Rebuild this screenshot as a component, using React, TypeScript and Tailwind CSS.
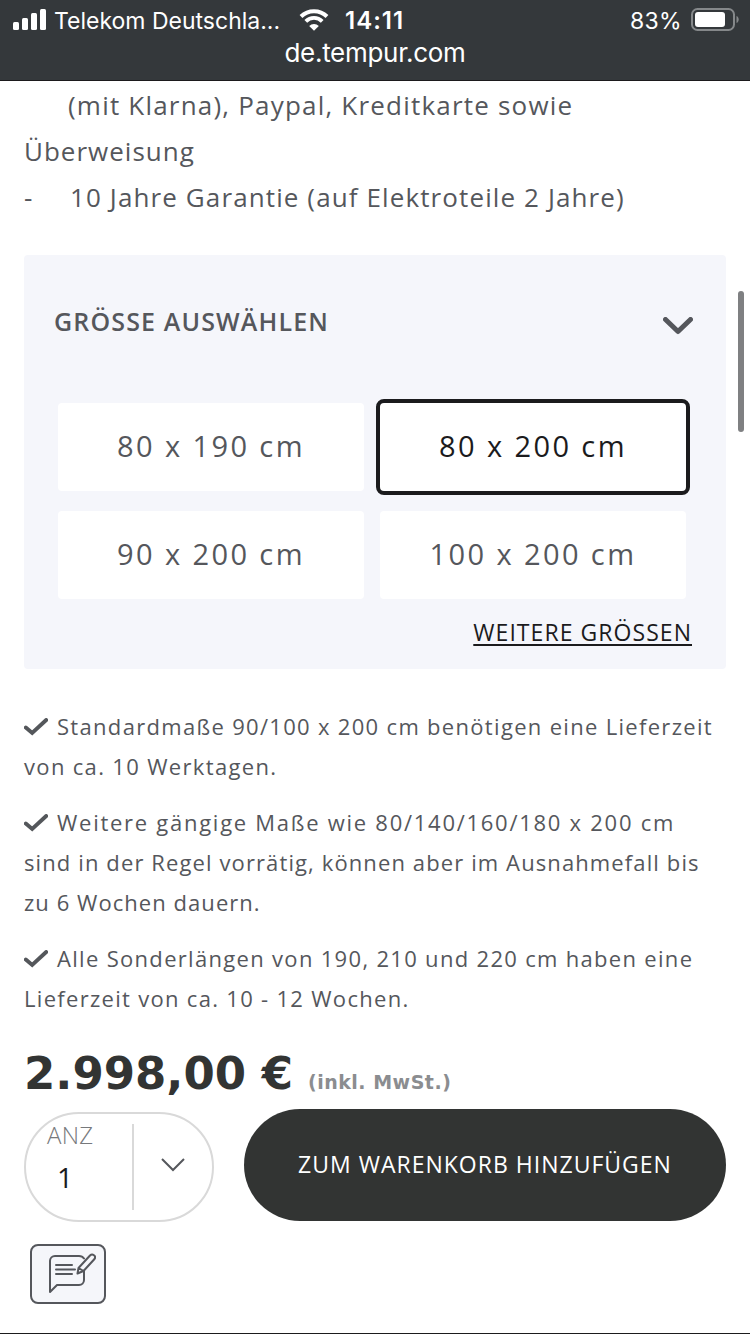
import React, { useState } from 'react'

const sizes = ['80 x 190 cm', '80 x 200 cm', '90 x 200 cm', '100 x 200 cm']

const notes = [
  [
    { text: 'Standardmaße 90/100 x 200 cm benötigen eine Lieferzeit', tracking: 'tracking-[1.31px]' },
    { text: 'von ca. 10 Werktagen.', tracking: 'tracking-[1.33px]' },
  ],
  [
    { text: 'Weitere gängige Maße wie 80/140/160/180 x 200 cm', tracking: 'tracking-[1.73px]' },
    { text: 'sind in der Regel vorrätig, können aber im Ausnahmefall bis', tracking: 'tracking-[1.11px]' },
    { text: 'zu 6 Wochen dauern.', tracking: 'tracking-[1.05px]' },
  ],
  [
    { text: 'Alle Sonderlängen von 190, 210 und 220 cm haben eine', tracking: 'tracking-[1.31px]' },
    { text: 'Lieferzeit von ca. 10 - 12 Wochen.', tracking: 'tracking-[1.3px]' },
  ],
]

function StatusBar() {
  return (
    <header className="h-[81px] shrink-0 border-b border-[#1c1a1d] bg-[#34383b] font-['Inter'] text-white">
      <div className="flex h-10 items-center pl-[13px] pr-[11px]">
        <svg width="34" height="21" viewBox="0 0 34 21" fill="white" className="-mt-px shrink-0">
          <rect x="0" y="13" width="6" height="8" rx="1.5" />
          <rect x="9" y="9" width="6" height="12" rx="1.5" />
          <rect x="18" y="4" width="6" height="17" rx="1.5" />
          <rect x="27" y="0" width="6" height="21" rx="1.5" />
        </svg>
        <span className="ml-[7px] w-[229px] whitespace-nowrap pt-0.5 text-[23px] leading-10">Telekom Deutschla...</span>
        <svg width="30" height="22" viewBox="0 0 30 22" className="ml-4 shrink-0">
          <path d="M2 7.5a18.5 18.5 0 0 1 26 0" fill="none" stroke="white" strokeWidth="4" />
          <path d="M6.8 12.3a11.6 11.6 0 0 1 16.4 0" fill="none" stroke="white" strokeWidth="3.8" />
          <path d="M10.2 17a6.8 6.8 0 0 1 9.6 0L15 21.8z" fill="white" />
        </svg>
        <span className="ml-4 whitespace-nowrap pt-0.5 text-[24px] font-semibold leading-10 tracking-[1px]">14:11</span>
        <span className="ml-auto whitespace-nowrap pt-0.5 text-[23px] leading-10 tracking-[0.3px]">83%</span>
        <svg width="48" height="24" viewBox="0 0 48 24" className="ml-[9px] shrink-0">
          <rect x="1" y="1" width="42" height="21" rx="5.5" fill="none" stroke="#85888a" strokeWidth="2" />
          <rect x="4" y="4" width="30" height="15" rx="3" fill="white" />
          <path d="M45.5 8v7c1.5-.6 2.2-2 2.2-3.5s-.7-2.9-2.2-3.5z" fill="#85888a" />
        </svg>
      </div>
      <p className="-mt-1 text-center text-[26px] leading-[34px] tracking-[-0.3px]">de.tempur.com</p>
    </header>
  )
}

function CheckMark() {
  return (
    <svg width="24" height="18" viewBox="0 0 24 18" className="mr-[9px] mt-px shrink-0">
      <path d="M1.8 9.5 8.2 15 22.2 2" fill="none" stroke="#54575b" strokeWidth="3.9" strokeLinecap="round" />
    </svg>
  )
}

function SizePicker() {
  const [selected, setSelected] = useState('80 x 200 cm')

  return (
    <section className="mt-[35px] h-[414px] rounded bg-[#f5f6fb] pl-[30px] pr-[36px]">
      <div className="flex h-[144px] items-center justify-between pb-[10px]">
        <h2 className="whitespace-nowrap text-[25px] font-semibold tracking-[1.15px] text-[#55575c]">GRÖSSE AUSWÄHLEN</h2>
        <svg width="30" height="18" viewBox="0 0 30 18" className="-mr-[3px] mt-2">
          <path d="M2.5 2.5 15 14.5 27.5 2.5" fill="none" stroke="#55575c" strokeWidth="5" strokeLinecap="round" strokeLinejoin="round" />
        </svg>
      </div>
      <div className="grid grid-cols-2 gap-x-2 gap-y-3">
        {sizes.map((size) => (
          <button
            key={size}
            onClick={() => setSelected(size)}
            className={`h-24 whitespace-nowrap rounded-lg border-4 bg-white bg-clip-padding pb-[3px] text-[29px] tracking-[2.4px] ${
              selected === size ? 'border-[#1b1b1d] text-[#1b1b1d]' : 'border-transparent text-[#55575c]'
            }`}
          >
            {size}
          </button>
        ))}
      </div>
      <div className="mt-[11px] flex justify-end">
        <a href="#" className="-mr-[2px] whitespace-nowrap text-[23px] leading-[36px] tracking-[1.05px] text-[#1b1b1d] underline decoration-2 underline-offset-[3px]">
          WEITERE GRÖSSEN
        </a>
      </div>
    </section>
  )
}

function BuyRow() {
  return (
    <div className="flex items-start">
      <div className="mt-[3px] flex h-[110px] w-[190px] shrink-0 rounded-full border-2 border-[#d9d9d9]">
        <div className="flex w-[106px] flex-col pl-[21px] pt-[4px]">
          <span className="text-[24px] font-light leading-[34px] tracking-[0.3px] text-[#77797c]">ANZ</span>
          <span className="pl-[10px] text-[28px] font-medium leading-[50px] text-[#1b1b1d]">1</span>
        </div>
        <div className="mt-[10px] h-[86px] w-[2px] bg-[#d9d9d9]" />
        <svg width="24" height="14" viewBox="0 0 24 14" className="ml-[27px] mt-[44px]">
          <path d="M1 1 12 12 23 1" fill="none" stroke="#55575c" strokeWidth="2" />
        </svg>
      </div>
      <button className="ml-[30px] h-[112px] w-[482px] whitespace-nowrap rounded-full bg-[#323433] pb-0.5 text-[23px] tracking-[1px] text-white">
        ZUM WARENKORB HINZUFÜGEN
      </button>
    </div>
  )
}

export default function App() {
  return (
    <div className="relative flex h-[1334px] w-[750px] flex-col overflow-hidden border-b border-[#1b1b1d] bg-white font-['Open_Sans','Noto_Sans',sans-serif] text-[#55575c]">
      <StatusBar />
      <main className="px-6 pt-px">
        <div className="whitespace-nowrap text-[26px] leading-[46px]">
          <p className="pl-[44px] tracking-[1.2px]">(mit Klarna), Paypal, Kreditkarte sowie</p>
          <p className="tracking-[1px]">Überweisung</p>
          <p className="flex tracking-[1.11px]">
            <span className="w-[46px]">-</span>
            <span>10 Jahre Garantie (auf Elektroteile 2 Jahre)</span>
          </p>
        </div>

        <SizePicker />

        <div className="mt-[37px] flex flex-col gap-4 whitespace-nowrap text-[22px] leading-10">
          {notes.map((lines) => (
            <div key={lines[0].text}>
              {lines.map((line, i) => (
                <p key={line.text} className={`flex items-center ${line.tracking}`}>
                  {i === 0 && <CheckMark />}
                  <span>{line.text}</span>
                </p>
              ))}
            </div>
          ))}
        </div>

        <div className="mt-6 flex h-[67px] items-baseline whitespace-nowrap font-['DejaVu_Sans',sans-serif] font-bold">
          <span className="w-[284px] text-[45px] leading-[64px] text-[#323433]">2.998,00 €</span>
          <span className="text-[19px] tracking-[0.5px] text-[#8b8d90]">(inkl. MwSt.)</span>
        </div>

        <BuyRow />

        <button className="ml-[6px] mt-[22px] flex h-[60px] w-[76px] items-center justify-center rounded-lg border-2 border-[#55575c] bg-[#f5f6fa] pl-1">
          <svg width="48" height="42" viewBox="0 0 48 42" fill="none" stroke="#55575c" strokeWidth="2" strokeLinejoin="round" strokeLinecap="round" className="ml-1 shrink-0">
            <path d="M36 5.5C35 4 33 3 31 3H7a5 5 0 0 0-5 5v31l7-7h22a5 5 0 0 0 5-5v-9" />
            <path d="M8 12h16M8 16.5h19M8 21h16" />
            <path d="M30.5 15 42 2.5c2.5-2.5 6.5.5 4.5 3.5L35.5 18l-6 2.5zM30.5 15l5 3" />
          </svg>
        </button>
      </main>

      {/* Scroll indicator */}
      <div className="absolute left-[738px] top-[291px] h-[141px] w-[6px] rounded-full bg-[#7f8082]" />
    </div>
  )
}
